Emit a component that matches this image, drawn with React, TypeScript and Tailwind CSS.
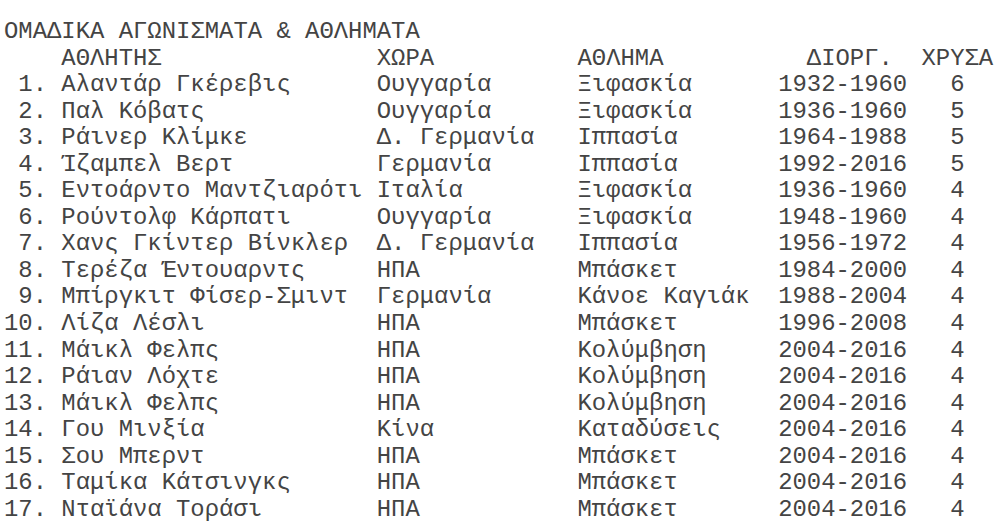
import React from 'react';

interface Athlete {
  name: string;
  country: string;
  sport: string;
  years: string;
  gold: number;
}

const athletes: Athlete[] = [
  { name: 'Αλαντάρ Γκέρεβις', country: 'Ουγγαρία', sport: 'Ξιφασκία', years: '1932-1960', gold: 6 },
  { name: 'Παλ Κόβατς', country: 'Ουγγαρία', sport: 'Ξιφασκία', years: '1936-1960', gold: 5 },
  { name: 'Ράινερ Κλίμκε', country: 'Δ. Γερμανία', sport: 'Ιππασία', years: '1964-1988', gold: 5 },
  { name: 'Ίζαμπελ Βερτ', country: 'Γερμανία', sport: 'Ιππασία', years: '1992-2016', gold: 5 },
  { name: 'Εντοάρντο Μαντζιαρότι', country: 'Ιταλία', sport: 'Ξιφασκία', years: '1936-1960', gold: 4 },
  { name: 'Ρούντολφ Κάρπατι', country: 'Ουγγαρία', sport: 'Ξιφασκία', years: '1948-1960', gold: 4 },
  { name: 'Χανς Γκίντερ Βίνκλερ', country: 'Δ. Γερμανία', sport: 'Ιππασία', years: '1956-1972', gold: 4 },
  { name: 'Τερέζα Έντουαρντς', country: 'ΗΠΑ', sport: 'Μπάσκετ', years: '1984-2000', gold: 4 },
  { name: 'Μπίργκιτ Φίσερ-Σμιντ', country: 'Γερμανία', sport: 'Κάνοε Καγιάκ', years: '1988-2004', gold: 4 },
  { name: 'Λίζα Λέσλι', country: 'ΗΠΑ', sport: 'Μπάσκετ', years: '1996-2008', gold: 4 },
  { name: 'Μάικλ Φελπς', country: 'ΗΠΑ', sport: 'Κολύμβηση', years: '2004-2016', gold: 4 },
  { name: 'Ράιαν Λόχτε', country: 'ΗΠΑ', sport: 'Κολύμβηση', years: '2004-2016', gold: 4 },
  { name: 'Μάικλ Φελπς', country: 'ΗΠΑ', sport: 'Κολύμβηση', years: '2004-2016', gold: 4 },
  { name: 'Γου Μινξία', country: 'Κίνα', sport: 'Καταδύσεις', years: '2004-2016', gold: 4 },
  { name: 'Σου Μπερντ', country: 'ΗΠΑ', sport: 'Μπάσκετ', years: '2004-2016', gold: 4 },
  { name: 'Ταμίκα Κάτσινγκς', country: 'ΗΠΑ', sport: 'Μπάσκετ', years: '2004-2016', gold: 4 },
  { name: 'Νταϊάνα Τοράσι', country: 'ΗΠΑ', sport: 'Μπάσκετ', years: '2004-2016', gold: 4 },
];

export default function App() {
  return (
    <div className="min-h-screen w-full bg-white pl-[4px] pt-[19px] font-['Liberation_Mono','DejaVu_Sans_Mono',monospace] text-[23.9px] leading-[26.55px] text-[#444] whitespace-pre">
      <div>ΟΜΑΔΙΚΑ ΑΓΩΝΙΣΜΑΤΑ &amp; ΑΘΛΗΜΑΤΑ</div>

      <div className="flex">
        <span className="w-[4ch] shrink-0" />
        <span className="w-[22ch] shrink-0">ΑΘΛΗΤΗΣ</span>
        <span className="w-[14ch] shrink-0">ΧΩΡΑ</span>
        <span className="w-[16ch] shrink-0">ΑΘΛΗΜΑ</span>
        <span className="w-[8ch] shrink-0">ΔΙΟΡΓ.</span>
        <span>ΧΡΥΣΑ</span>
      </div>

      {athletes.map((a, i) => (
        <div key={i} className="flex">
          <span className="w-[3ch] shrink-0 text-right">{i + 1}.</span>
          <span className="w-[1ch] shrink-0" />
          <span className="w-[22ch] shrink-0">{a.name}</span>
          <span className="w-[14ch] shrink-0">{a.country}</span>
          <span className="w-[14ch] shrink-0">{a.sport}</span>
          <span className="w-[12ch] shrink-0">{a.years}</span>
          <span>{a.gold}</span>
        </div>
      ))}
    </div>
  );
}
